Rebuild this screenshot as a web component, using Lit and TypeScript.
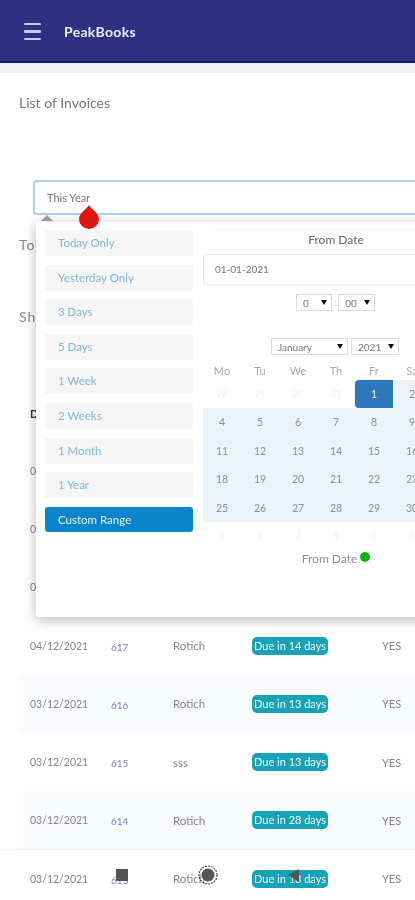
import { LitElement, html, css } from "lit";
import { customElement } from "lit/decorators.js";

const rows = [
  { d: "04/12/2021", n: "617", c: "Rotich", b: "Due in 14 days" },
  { d: "03/12/2021", n: "616", c: "Rotich", b: "Due in 13 days" },
  { d: "03/12/2021", n: "615", c: "sss", b: "Due in 13 days" },
  { d: "03/12/2021", n: "614", c: "Rotich", b: "Due in 28 days" },
  { d: "03/12/2021", n: "613", c: "Rotich", b: "Due in 13 days" },
];
const presets = ["Today Only", "Yesterday Only", "3 Days", "5 Days", "1 Week", "2 Weeks", "1 Month", "1 Year"];
const weekdays = ["Mo", "Tu", "We", "Th", "Fr", "Sa"];
const weeks = [
  ["28", "29", "30", "31", "1", "2"],
  ["4", "5", "6", "7", "8", "9"],
  ["11", "12", "13", "14", "15", "16"],
  ["18", "19", "20", "21", "22", "23"],
  ["25", "26", "27", "28", "29", "30"],
  ["1", "2", "3", "4", "5", "6"],
];

@customElement("app-root")
export class AppRoot extends LitElement {
  static styles = css`
    :host {
      display: block;
      width: 415px;
      height: 900px;
      overflow: hidden;
      position: relative;
      background: #fff;
      font-family: Lato, "Open Sans", sans-serif;
      color: #6f6f73;
    }
    .page { filter: blur(0.45px); height: 900px; position: relative; overflow: hidden; }
    .bar {
      height: 59px;
      padding: 2px 0 0 24px;
      background: #2e3083;
      border-bottom: 2px solid #17187a;
      display: flex;
      align-items: center;
      gap: 23px;
    }
    .burger { display: flex; flex-direction: column; gap: 5px; width: 17px; }
    .burger i { display: block; height: 2.5px; background: #c9cbe8; border-radius: 1px; }
    .brand { color: #eeeefa; font-size: 14px; font-weight: 700; letter-spacing: 0.3px; }
    .band { height: 10px; background: #eef0f3; }
    h1 { margin: 21px 0 0 19px; font-size: 14px; font-weight: 400; line-height: 18px; color: #77777b; }
    .field {
      display: block;
      box-sizing: border-box;
      margin: 68px 0 0 33px;
      width: 400px;
      height: 35px;
      border: 2px solid #a9d2f3;
      border-radius: 4px;
      padding: 0 12px;
      font: 400 11px Lato, sans-serif;
      color: #77777b;
      background: #fff;
      outline: none;
    }
    .side { margin: 21px 0 0 19px; font-size: 14px; letter-spacing: 1px; line-height: 18px; color: #8a8a8e; }
    .side.s2 { margin-top: 54px; }
    .head, .row {
      display: grid;
      grid-template-columns: 81px 62px 79px 130px 1fr;
      align-items: center;
      padding-left: 30px;
      font-size: 10.5px;
    }
    .head { margin-top: 58px; height: 58px; font-weight: 700; color: #333; font-size: 11px; }
    .row { height: 58.2px; color: #85858a; margin-left: 20px; padding-left: 10px; box-sizing: border-box; }
    .row.alt { background: #f9fbfe; }
    .row.last { margin-left: 0; padding-left: 30px; border-top: 1px solid #eff0f3; }
    .row .num { color: #7f78d6; font-size: 10px; padding-top: 2px; }
    .row .who { font-size: 11.5px; }
    .row .yes { font-size: 11px; }
    .badge {
      justify-self: start;
      background: #17a2b8;
      color: #eefbfd;
      border-radius: 5px;
      padding: 2px 2px;
      line-height: 14px;
      font-size: 11px;
      white-space: nowrap;
    }
    .caret {
      position: absolute;
      left: 41px;
      top: 215px;
      width: 0;
      height: 0;
      border-left: 6px solid transparent;
      border-right: 6px solid transparent;
      border-bottom: 6px solid #a4a4a8;
    }
    .popup {
      position: absolute;
      left: 36px;
      top: 222px;
      width: 420px;
      height: 395px;
      background: #fff;
      border-radius: 3px;
      box-shadow: 0 3px 14px rgba(0, 0, 0, 0.28);
      display: flex;
    }
    .presets { width: 148px; margin: 8px 0 0 9px; display: flex; flex-direction: column; gap: 8.6px; flex: none; }
    .preset {
      height: 26px;
      line-height: 26px;
      background: #f5f5f6;
      border-radius: 3px;
      padding-left: 13px;
      font-size: 11.5px;
      color: #7db8d8;
    }
    .preset.on { background: #0a85cc; color: #e6f4fc; height: 25px; line-height: 25px; }
    .cal { margin-left: 10px; width: 240px; flex: none; }
    .cal-title {
      margin: 7px 0 0 10px;
      height: 20px;
      line-height: 20px;
      width: 246px;
      text-align: center;
      font-size: 12px;
      color: #66666a;
      border-top: 1px solid #f5f5f7;
    }
    .date {
      margin-top: 4px;
      box-sizing: border-box;
      height: 31px;
      width: 240px;
      border: 1px solid #e9e9ec;
      border-radius: 2px;
      line-height: 29px;
      padding-left: 11px;
      font-size: 10px;
      color: #77777b;
    }
    .pick { position: relative; display: block; height: 17px; }
    .pick::after {
      content: "";
      position: absolute;
      right: 5px;
      top: 6px;
      border-left: 3.5px solid transparent;
      border-right: 3.5px solid transparent;
      border-top: 5px solid #111;
      pointer-events: none;
    }
    select {
      appearance: none;
      display: block;
      width: 100%;
      font: 400 10px Lato, sans-serif;
      color: #77777b;
      background: #fff;
      border: 1px solid #d9d9dc;
      border-radius: 0;
      height: 17px;
      padding: 0 0 0 6px;
      box-sizing: border-box;
    }
    .time { display: flex; gap: 2px; margin: 9px 0 0 93px; align-items: center; font-size: 9px; color: #bbb; }
    .time .pick:first-child { width: 36px; }
    .time .pick:last-child { width: 37px; }
    .ym { display: flex; gap: 3px; margin: 27px 0 0 68px; }
    .ym .pick:first-child { width: 77px; }
    .ym .pick:last-child { width: 48px; }
    .grid { display: grid; grid-template-columns: repeat(6, 38px); margin-top: 7px; }
    .grid div { height: 28.4px; line-height: 28.4px; text-align: center; font-size: 10.5px; color: #8f8f93; }
    .grid .wd { display: contents; }
    .wd div { height: 18px; line-height: 18px; color: #a8a8ac; font-size: 11px; }
    .grid .in { background: #ebf3f9; }
    .grid .off { color: #eeeef0; font-size: 9px; }
    .grid .sel { background: #2f77bb; color: #e8f1fa; border-radius: 4px 0 0 4px; }
    .legend { display: flex; justify-content: center; align-items: center; gap: 3px; font-size: 12px; color: #8f8f93; width: 266px; height: 16px; }
    .dot { width: 10px; height: 10px; border-radius: 50%; background: #0cb30c; margin-top: -3px; }
    .drop { position: absolute; left: 78px; top: 204px; }
    .nav { position: absolute; left: 0; top: 0; }
  `;

  render() {
    return html`
      <div class="page">
        <div class="bar">
          <div class="burger"><i></i><i></i><i></i></div>
          <div class="brand">PeakBooks</div>
        </div>
        <div class="band"></div>
        <h1>List of Invoices</h1>
        <input class="field" .value=${"This Year"} readonly />
        <div class="side">Total</div>
        <div class="side s2">Show</div>
        <div class="head"><span>Date</span></div>
        ${[0, 1, 2].map(() => html`<div class="row"><span>03/12/2021</span></div>`)}
        ${rows.map(
          (r, i) => html`<div class="row ${i % 2 === 1 ? "alt" : ""} ${i === 4 ? "last" : ""}">
            <span>${r.d}</span><span class="num">${r.n}</span><span class="who">${r.c}</span>
            <span class="badge">${r.b}</span><span class="yes">YES</span>
          </div>`
        )}

        <div class="caret"></div>
        <div class="popup">
          <div class="presets">
            ${presets.map((p) => html`<div class="preset">${p}</div>`)}
            <div class="preset on">Custom Range</div>
          </div>
          <div class="cal">
            <div class="cal-title">From Date</div>
            <div class="date">01-01-2021</div>
            <div class="time">
              <span class="pick"><select><option>0</option></select></span>:<span class="pick"><select><option>00</option></select></span>
            </div>
            <div class="ym">
              <span class="pick"><select><option>January</option></select></span>
              <span class="pick"><select><option>2021</option></select></span>
            </div>
            <div class="grid">
              <div class="wd">${weekdays.map((d) => html`<div>${d}</div>`)}</div>
              ${weeks.map((w, wi) =>
                w.map((d, di) => {
                  const cls =
                    wi === 0 && di === 4
                      ? "sel"
                      : (wi === 0 && di < 4) || wi === 5
                      ? "off"
                      : "in";
                  return html`<div class=${cls}>${d}</div>`;
                })
              )}
            </div>
            <div class="legend">From Date <span class="dot"></span></div>
          </div>
        </div>

        <svg class="drop" width="22" height="26" viewBox="0 0 22 26">
          <path d="M11 1 C13 5 21 9 21 15 A10 10 0 0 1 1 15 C1 9 9 5 11 1Z" fill="#e0140f" />
        </svg>
        <svg class="nav" width="415" height="900" viewBox="0 0 415 900">
          <rect x="116" y="869" width="12" height="12" fill="#555" />
          <circle cx="208" cy="875" r="9" fill="none" stroke="#444" stroke-width="1.2" stroke-dasharray="2 1" />
          <circle cx="208" cy="875" r="6.5" fill="#555" />
          <path d="M299 869 V882 L288 875Z" fill="#555" />
        </svg>
      </div>
    `;
  }
}
